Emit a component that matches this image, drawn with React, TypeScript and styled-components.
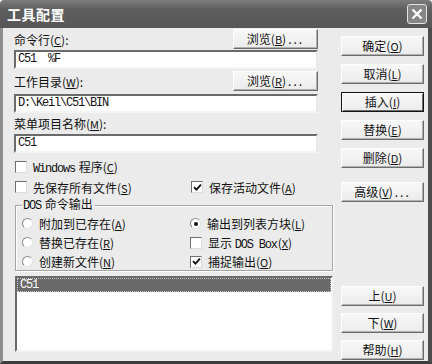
import React from 'react';
import styled, { createGlobalStyle, css } from 'styled-components';

const CJK = `"Noto Sans CJK SC", "Noto Sans", sans-serif`;
const MONO = `"Liberation Mono", "Noto Sans CJK SC", monospace`;

const GlobalStyle = createGlobalStyle`
  html, body { margin: 0; padding: 0; background: #fff; }
`;

const Window = styled.div`
  width: 432px;
  height: 364px;
  display: flex;
  flex-direction: column;
  font-family: ${CJK};
  font-size: 12px;
  color: #111;
`;

const TitleBar = styled.div`
  height: 28px;
  flex: none;
  display: flex;
  align-items: center;
  justify-content: space-between;
  padding: 0 5px 0 7px;
  background: linear-gradient(#7c7c7c, #5e5e5e 35%, #575757);
  border-radius: 4px 4px 0 0;
`;

const Title = styled.span`
  color: #fff;
  font-weight: 700;
  font-size: 14px;
  letter-spacing: 0.5px;
`;

const CloseBox = styled.div`
  width: 20px;
  height: 20px;
  box-sizing: border-box;
  border: 1px solid #e4e4e4;
  border-radius: 3px;
  background: #858585;
  display: flex;
  align-items: center;
  justify-content: center;
`;

const Body = styled.div`
  flex: 1;
  display: flex;
  gap: 8px;
  padding: 0 4px 0 11px;
  background: #ebebeb;
  border-left: 3px solid #8e8e8e;
  border-right: 4px solid #4c4c4c;
  border-bottom: 3px solid #3c3c3c;
`;

const LeftCol = styled.div`
  width: 319px;
  display: flex;
  flex-direction: column;
`;

const RightCol = styled.div`
  width: 83px;
  display: flex;
  flex-direction: column;
  padding: 8px 0 1px;
`;

const BtnStack = styled.div<{ $gap: number; $top?: number; $push?: boolean }>`
  display: flex;
  flex-direction: column;
  gap: ${p => p.$gap}px;
  margin-top: ${p => (p.$push ? 'auto' : `${p.$top || 0}px`)};
`;

const FieldRow = styled.div<{ $top: number }>`
  width: 304px;
  height: 20px;
  margin-top: ${p => p.$top}px;
  display: flex;
  align-items: center;
  justify-content: space-between;
`;

const Label = styled.div<{ $top?: number }>`
  height: 18px;
  line-height: 18px;
  margin-top: ${p => p.$top || 0}px;
`;

const Key = styled.span`
  text-decoration: underline;
  font-size: 11px;
`;

const Lat = styled.span`
  font-family: ${MONO};
  font-size: 12px;
  letter-spacing: -1.2px;
  margin-right: 1px;
`;

const Btn = styled.button<{ $default?: boolean; $w?: number }>`
  box-sizing: border-box;
  width: ${p => p.$w || 83}px;
  height: 20px;
  padding: 0;
  font-family: ${CJK};
  font-size: 12px;
  color: #111;
  line-height: 1;
  background: linear-gradient(#f8f8f8, #ebebeb);
  border: 1px solid;
  border-color: #fff #6c6c6c #6c6c6c #fff;
  box-shadow: inset -1px -1px #b0b0b0;
  ${p =>
    p.$default &&
    css`
      border-color: #111;
      box-shadow: inset 1px 1px #fff, inset -1px -1px #6c6c6c;
    `}
`;

const Dots = styled.span`
  letter-spacing: 2px;
  margin-left: 2px;
`;

const TextBox = styled.div<{ $top: number }>`
  box-sizing: border-box;
  width: 304px;
  height: 19px;
  margin-top: ${p => p.$top}px;
  padding: 0 2px;
  background: #fff;
  border: 2px solid;
  border-color: #6a6a6a #e8e8e8 #f4f4f4 #6a6a6a;
  font-family: ${MONO};
  font-size: 12px;
  letter-spacing: -1.2px;
  line-height: 15px;
  white-space: pre;
`;

const CheckRow = styled.div<{ $top: number }>`
  display: grid;
  grid-template-columns: 176px 1fr;
  height: 18px;
  margin-top: ${p => p.$top}px;
  padding-left: 1px;
`;

const Opt = styled.div`
  display: flex;
  align-items: center;
  gap: 6px;
  white-space: nowrap;
`;

const Box = styled.span`
  box-sizing: border-box;
  width: 12px;
  height: 12px;
  flex: none;
  background: #fff;
  border: 1px solid;
  border-color: #707070 #dcdcdc #dcdcdc #707070;
  display: flex;
  align-items: center;
  justify-content: center;
`;

const Dot = styled.span<{ $on?: boolean }>`
  box-sizing: border-box;
  width: 11px;
  height: 11px;
  flex: none;
  border-radius: 50%;
  background: #fff;
  border: 1px solid;
  border-color: #8a8a8a #e2e2e2 #e2e2e2 #8a8a8a;
  display: flex;
  align-items: center;
  justify-content: center;
  &::after {
    content: '';
    width: 4px;
    height: 4px;
    border-radius: 50%;
    background: ${p => (p.$on ? '#111' : 'transparent')};
  }
`;

const Group = styled.fieldset`
  box-sizing: border-box;
  width: 318px;
  height: 75px;
  margin: 0 0 0 1px;
  padding: 0 0 0 6px;
  border: 1px solid #a4a4a4;
  box-shadow: 1px 1px #fff, inset 1px 1px #fff;
`;

const Legend = styled.legend`
  padding: 0 2px 0 1px;
  line-height: 16px;
`;

const RadioGrid = styled.div`
  display: grid;
  grid-template-columns: 168px 1fr;
  grid-auto-rows: 19px;
`;

const ListBox = styled.div`
  box-sizing: border-box;
  width: 318px;
  height: 76px;
  margin: 5px 0 0 1px;
  background: #fff;
  border: 2px solid;
  border-color: #6a6a6a #f4f4f4 #f4f4f4 #6a6a6a;
`;

const ListItem = styled.div<{ $selected?: boolean }>`
  box-sizing: border-box;
  height: 14px;
  line-height: 12px;
  padding: 0 2px;
  font-family: ${MONO};
  font-size: 12px;
  letter-spacing: -1.2px;
  color: ${p => (p.$selected ? '#fff' : '#111')};
  background: ${p => (p.$selected ? '#6a6a6a' : 'transparent')};
  border: 1px dotted ${p => (p.$selected ? '#c8c8c8' : 'transparent')};
`;

const Check = () => (
  <svg width="9" height="9" viewBox="0 0 9 9">
    <path d="M1 4.2 L3.4 6.6 L8 1.6" stroke="#111" strokeWidth="1.8" fill="none" />
  </svg>
);

const CloseX = () => (
  <svg width="12" height="12" viewBox="0 0 12 12">
    <path d="M1.5 1.5 L10.5 10.5 M10.5 1.5 L1.5 10.5" stroke="#fff" strokeWidth="2.4" />
  </svg>
);

const CheckOpt = ({ on, children }: { on?: boolean; children: React.ReactNode }) => (
  <Opt>
    <Box>{on && <Check />}</Box>
    <span>{children}</span>
  </Opt>
);

const RadioOpt = ({ on, children }: { on?: boolean; children: React.ReactNode }) => (
  <Opt>
    <Dot $on={on} />
    <span>{children}</span>
  </Opt>
);

const K = ({ c }: { c: string }) => (
  <>
    (<Key>{c}</Key>)
  </>
);

export default function App() {
  return (
    <>
      <GlobalStyle />
      <Window>
        <TitleBar>
          <Title>工具配置</Title>
          <CloseBox>
            <CloseX />
          </CloseBox>
        </TitleBar>
        <Body>
          <LeftCol>
            <FieldRow $top={1}>
              <span>命令行<K c="C" />:</span>
              <Btn $w={85}>浏览<K c="B" /><Dots>...</Dots></Btn>
            </FieldRow>
            <TextBox $top={1}>C51  %F</TextBox>
            <FieldRow $top={2}>
              <span>工作目录<K c="W" />:</span>
              <Btn $w={85}>浏览<K c="R" /><Dots>...</Dots></Btn>
            </FieldRow>
            <TextBox $top={3}>D:\Keil\C51\BIN</TextBox>
            <Label $top={2}>菜单项目名称<K c="M" />:</Label>
            <TextBox $top={1}>C51</TextBox>
            <CheckRow $top={5}>
              <CheckOpt><Lat>Windows</Lat> 程序<K c="C" /></CheckOpt>
            </CheckRow>
            <CheckRow $top={2}>
              <CheckOpt>先保存所有文件<K c="S" /></CheckOpt>
              <CheckOpt on>保存活动文件<K c="A" /></CheckOpt>
            </CheckRow>
            <Group>
              <Legend><Lat>DOS</Lat> 命令输出</Legend>
              <RadioGrid>
                <RadioOpt>附加到已存在<K c="A" /></RadioOpt>
                <RadioOpt on>输出到列表方块<K c="L" /></RadioOpt>
                <RadioOpt>替换已存在<K c="R" /></RadioOpt>
                <CheckOpt>显示 <Lat>DOS Box</Lat><K c="X" /></CheckOpt>
                <RadioOpt>创建新文件<K c="N" /></RadioOpt>
                <CheckOpt on>捕捉输出<K c="O" /></CheckOpt>
              </RadioGrid>
            </Group>
            <ListBox>
              <ListItem $selected>C51</ListItem>
            </ListBox>
          </LeftCol>
          <RightCol>
            <BtnStack $gap={8}>
              <Btn>确定<K c="O" /></Btn>
              <Btn>取消<K c="L" /></Btn>
              <Btn $default>插入<K c="I" /></Btn>
              <Btn>替换<K c="E" /></Btn>
              <Btn>删除<K c="D" /></Btn>
            </BtnStack>
            <BtnStack $gap={0} $top={14}>
              <Btn>高级<K c="V" /><Dots>...</Dots></Btn>
            </BtnStack>
            <BtnStack $gap={7} $push>
              <Btn>上<K c="U" /></Btn>
              <Btn>下<K c="W" /></Btn>
              <Btn>帮助<K c="H" /></Btn>
            </BtnStack>
          </RightCol>
        </Body>
      </Window>
    </>
  );
}
